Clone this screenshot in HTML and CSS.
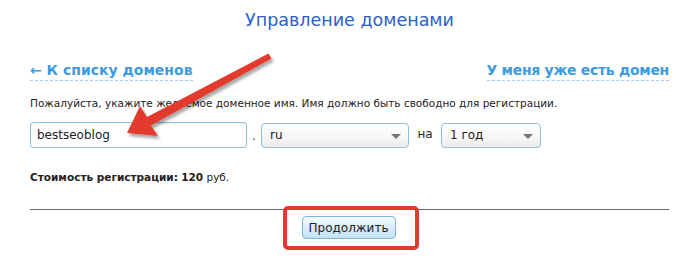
FILE: index.html
```html
<!DOCTYPE html>
<html lang="ru">
<head>
<meta charset="utf-8">
<title>Управление доменами</title>
<link rel="stylesheet" href="styles.css">
</head>
<body>
<div class="page">
  <h1 class="title">Управление доменами</h1>
  <div class="links">
    <a class="dlink" href="#">← К списку доменов</a>
    <a class="dlink" href="#">У меня уже есть домен</a>
  </div>
  <p class="hint">Пожалуйста, укажите желаемое доменное имя. Имя должно быть свободно для регистрации.</p>
  <div class="form-row">
    <input class="field" type="text" value="bestseoblog">
    <span class="dot">.</span>
    <div class="sel sel-zone"><span>ru</span></div>
    <span class="na">на</span>
    <div class="sel sel-period"><span>1 год</span></div>
  </div>
  <p class="cost"><b>Стоимость регистрации:</b> <b>120</b> руб.</p>
  <div class="divider"></div>
  <div class="actions">
    <button class="btn" type="button">Продолжить</button>
    <div class="highlight"></div>
  </div>
  <svg class="arrow" width="697" height="274" viewBox="0 0 697 274">
    <defs>
      <filter id="sh" x="-20%" y="-20%" width="140%" height="140%">
        <feDropShadow dx="2" dy="3" stdDeviation="1.5" flood-color="#000" flood-opacity="0.35"/>
      </filter>
    </defs>
    <polygon filter="url(#sh)" fill="#e23b2e" points="127,133 140,106 147,117 268.5,53.5 271.5,58.5 151,125.5 158,136"/>
  </svg>
</div>
</body>
</html>
```
FILE: styles.css
```css
html, body {
  margin: 0;
  padding: 0;
  background: #fff;
}
.page {
  position: relative;
  width: 697px;
  height: 274px;
  padding: 0 28px 0 30px;
  box-sizing: border-box;
  font-family: "DejaVu Sans", Verdana, sans-serif;
  color: #222;
  overflow: hidden;
}
.title {
  margin: 0;
  padding-top: 8px;
  height: 26px;
  line-height: 24px;
  text-align: center;
  font-size: 17.5px;
  font-weight: normal;
  color: #2c5fc9;
}
.links {
  display: flex;
  justify-content: space-between;
  margin-top: 27px;
  height: 22px;
}
.dlink {
  font-size: 14px;
  font-weight: bold;
  color: #3d9be0;
  text-decoration: none;
  line-height: 18px;
  height: 19px;
  border-bottom: 1px dashed #a9c8f2;
}
.dlink + .dlink {
  letter-spacing: -0.3px;
}
.hint {
  margin: 13px 0 0;
  font-size: 10.5px;
  line-height: 14px;
  color: #222;
}
.form-row {
  display: flex;
  align-items: center;
  margin-top: 12px;
  height: 26px;
}
.field {
  box-sizing: border-box;
  width: 217px;
  height: 26px;
  margin: 0;
  padding: 0 6px;
  border: 1px solid #8fc0df;
  border-radius: 3px;
  font-family: "DejaVu Sans", Verdana, sans-serif;
  font-size: 12px;
  color: #222;
  box-shadow: inset 0 1px 2px rgba(0,0,0,0.08);
  outline: none;
}
.dot {
  width: 14px;
  text-align: center;
  font-size: 12px;
  color: #444;
  padding-top: 2px;
}
.sel {
  position: relative;
  box-sizing: border-box;
  height: 25px;
  border: 1px solid #8fc0df;
  border-radius: 4px;
  background: linear-gradient(#ffffff, #f7f7f7 55%, #ebebeb);
  font-size: 12px;
  line-height: 23px;
  padding-left: 8px;
  color: #222;
}
.sel::after {
  content: "";
  position: absolute;
  right: 7px;
  top: 10px;
  border-left: 5px solid transparent;
  border-right: 5px solid transparent;
  border-top: 5px solid #777;
}
.sel-zone {
  width: 148px;
}
.sel-period {
  width: 100px;
}
.na {
  width: 32px;
  text-align: center;
  font-size: 12px;
  color: #222;
  padding-bottom: 2px;
}
.cost {
  margin: 22px 0 0;
  font-size: 10.5px;
  line-height: 14px;
  color: #222;
}
.cost b {
  font-weight: bold;
}
.divider {
  margin-top: 25px;
  height: 1px;
  background: #666;
}
.actions {
  position: relative;
  display: flex;
  justify-content: center;
  padding-top: 6px;
  padding-right: 2px;
}
.btn {
  box-sizing: border-box;
  width: 94px;
  height: 23px;
  margin: 0;
  padding: 0;
  border: 1px solid #7cb7da;
  border-radius: 4px;
  background: linear-gradient(#f4fafd, #d9edf8 50%, #c3e2f2);
  font-family: "DejaVu Sans", Verdana, sans-serif;
  font-size: 12px;
  color: #222;
}
.highlight {
  position: absolute;
  left: 253px;
  top: -4px;
  width: 136px;
  height: 44px;
  box-sizing: border-box;
  border: 4px solid #e23b2e;
  border-radius: 5px;
}
.arrow {
  position: absolute;
  left: 0;
  top: 0;
  pointer-events: none;
}
```
